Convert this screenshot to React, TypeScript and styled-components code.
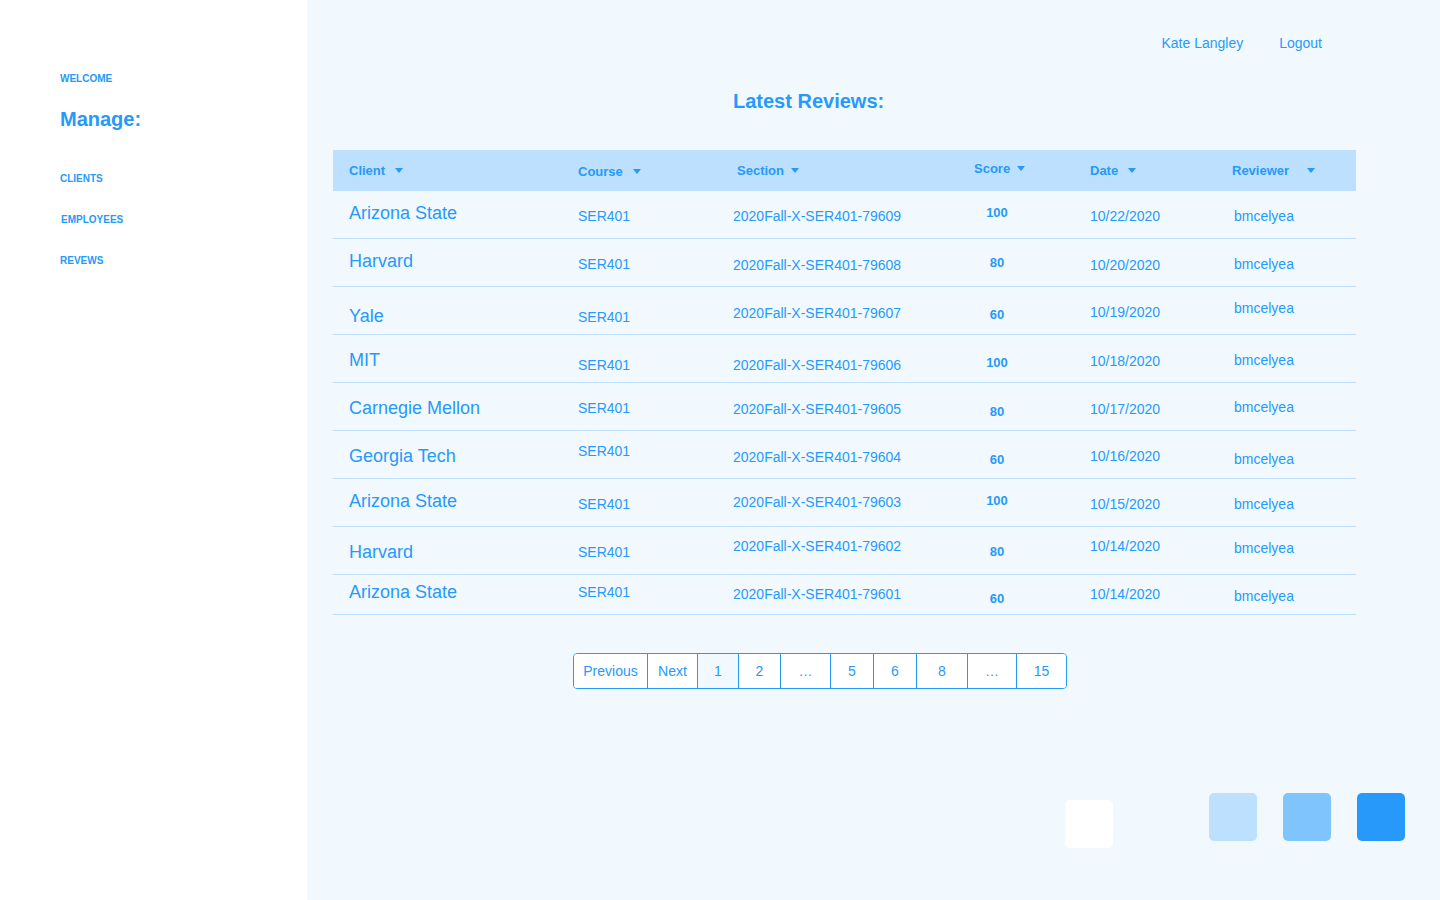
import React from "react";
import styled, { createGlobalStyle } from "styled-components";

const BLUE = "#2699fb";
const LIGHT = "#bce0fd";
const MID = "#7fc4fd";
const PALE = "#f1f9ff";

const GlobalStyle = createGlobalStyle`
  html, body {
    margin: 0;
    padding: 0;
    background: ${PALE};
    font-family: "Liberation Sans", Arial, sans-serif;
    color: ${BLUE};
  }
  * { box-sizing: border-box; }
`;

const Page = styled.div`
  display: flex;
  min-height: 100vh;
`;

const Sidebar = styled.aside`
  width: 307px;
  flex-shrink: 0;
  background: #ffffff;
  padding: 73px 0 0 60px;
  display: flex;
  flex-direction: column;
`;

const Welcome = styled.div`
  font-size: 10px;
  line-height: 12px;
  font-weight: 700;
`;

const Manage = styled.h2`
  margin: 23px 0 42px;
  font-size: 20px;
  line-height: 23px;
  font-weight: 700;
`;

const NavList = styled.nav`
  display: flex;
  flex-direction: column;
  gap: 29px;
`;

const NavItem = styled.a<{ $indent?: number }>`
  font-size: 10px;
  line-height: 12px;
  font-weight: 700;
  color: ${BLUE};
  text-decoration: none;
  padding-left: ${(p) => p.$indent ?? 0}px;
`;

const Main = styled.main`
  flex: 1;
  padding: 35px 84px 0 26px;
  display: flex;
  flex-direction: column;
`;

const TopBar = styled.div`
  display: flex;
  justify-content: flex-end;
  gap: 36px;
  padding-right: 34px;
`;

const TopLink = styled.a`
  font-size: 14px;
  line-height: 17px;
  color: ${BLUE};
  text-decoration: none;
`;

const Title = styled.h1`
  margin: 38px 0 37px;
  padding-left: 400px;
  font-size: 20px;
  line-height: 23px;
  font-weight: 700;
`;

const COLS = "229px 155px 241px 116px 142px 1fr";

const HeaderRow = styled.div`
  display: grid;
  grid-template-columns: ${COLS};
  align-items: center;
  height: 41px;
  padding-left: 16px;
  background: ${LIGHT};
`;

const HeaderCell = styled.div<{ $indent?: number; $dy?: number }>`
  display: flex;
  align-items: center;
  font-size: 13px;
  font-weight: 700;
  padding-left: ${(p) => p.$indent ?? 0}px;
  transform: translateY(${(p) => p.$dy ?? 0}px);
`;

const Caret = styled.span<{ $gap: number }>`
  margin-left: ${(p) => p.$gap}px;
  width: 0;
  height: 0;
  border-left: 4px solid transparent;
  border-right: 4px solid transparent;
  border-top: 5px solid ${BLUE};
`;

const Row = styled.div<{ $h: number }>`
  display: grid;
  grid-template-columns: ${COLS};
  align-items: start;
  height: ${(p) => p.$h}px;
  padding-left: 16px;
  border-bottom: 1px solid ${LIGHT};
`;

const Cell = styled.div<{ $dy: number }>`
  padding-top: ${(p) => p.$dy}px;
  font-size: 14px;
  line-height: 16px;
`;

const ClientCell = styled(Cell)`
  font-size: 18px;
  line-height: 21px;
`;

const ScoreCell = styled(Cell)`
  width: 46px;
  text-align: center;
  font-size: 13px;
  line-height: 15px;
  font-weight: 700;
`;

const ReviewerCell = styled(Cell)`
  padding-left: 2px;
`;

const Pager = styled.div`
  display: flex;
  margin: 38px 0 0 240px;
  width: max-content;
  border: 1px solid ${BLUE};
  border-radius: 4px;
  overflow: hidden;
  background: #ffffff;
`;

const PageBtn = styled.button<{ $w: number; $active?: boolean }>`
  width: ${(p) => p.$w}px;
  height: 34px;
  border: none;
  border-left: 1px solid ${BLUE};
  background: ${(p) => (p.$active ? PALE : "#ffffff")};
  color: ${BLUE};
  font-family: "Liberation Sans", Arial, sans-serif;
  font-size: 14px;
  padding: 0;
  cursor: pointer;
  &:first-child { border-left: none; }
`;

const Swatches = styled.div`
  display: flex;
  justify-content: flex-end;
  align-items: flex-start;
  margin: 104px -49px 0 0;
`;

const Swatch = styled.div<{ $color: string; $dy?: number; $gap?: number }>`
  width: 48px;
  height: 48px;
  border-radius: 5px;
  background: ${(p) => p.$color};
  margin-top: ${(p) => p.$dy ?? 0}px;
  margin-right: ${(p) => p.$gap ?? 0}px;
`;

type Review = {
  client: string;
  section: string;
  score: number;
  date: string;
  dy: [number, number, number, number, number, number];
};

const reviews: Review[] = [
  { client: "Arizona State", section: "79609", score: 100, date: "10/22/2020", dy: [12, 17, 17, 14, 17, 17] },
  { client: "Harvard", section: "79608", score: 80, date: "10/20/2020", dy: [12, 17, 18, 16, 18, 17] },
  { client: "Yale", section: "79607", score: 60, date: "10/19/2020", dy: [19, 22, 18, 20, 17, 13] },
  { client: "MIT", section: "79606", score: 100, date: "10/18/2020", dy: [15, 22, 22, 20, 18, 17] },
  { client: "Carnegie Mellon", section: "79605", score: 80, date: "10/17/2020", dy: [15, 17, 18, 21, 18, 16] },
  { client: "Georgia Tech", section: "79604", score: 60, date: "10/16/2020", dy: [15, 12, 18, 21, 17, 20] },
  { client: "Arizona State", section: "79603", score: 100, date: "10/15/2020", dy: [12, 17, 15, 14, 17, 17] },
  { client: "Harvard", section: "79602", score: 80, date: "10/14/2020", dy: [15, 17, 11, 17, 11, 13] },
  { client: "Arizona State", section: "79601", score: 60, date: "10/14/2020", dy: [7, 9, 11, 16, 11, 13] },
];

const pages: { label: string; w: number; active?: boolean }[] = [
  { label: "Previous", w: 73 },
  { label: "Next", w: 50 },
  { label: "1", w: 41, active: true },
  { label: "2", w: 42 },
  { label: "…", w: 50 },
  { label: "5", w: 43 },
  { label: "6", w: 43 },
  { label: "8", w: 51 },
  { label: "…", w: 49 },
  { label: "15", w: 50 },
];

export default function App() {
  return (
    <>
      <GlobalStyle />
      <Page>
        <Sidebar>
          <Welcome>WELCOME</Welcome>
          <Manage>Manage:</Manage>
          <NavList>
            <NavItem href="#">CLIENTS</NavItem>
            <NavItem href="#" $indent={1}>EMPLOYEES</NavItem>
            <NavItem href="#">REVEWS</NavItem>
          </NavList>
        </Sidebar>
        <Main>
          <TopBar>
            <TopLink href="#">Kate Langley</TopLink>
            <TopLink href="#">Logout</TopLink>
          </TopBar>
          <Title>Latest Reviews:</Title>

          <HeaderRow>
            <HeaderCell>Client<Caret $gap={10} /></HeaderCell>
            <HeaderCell $dy={1}>Course<Caret $gap={10} /></HeaderCell>
            <HeaderCell $indent={4}>Section<Caret $gap={7} /></HeaderCell>
            <HeaderCell $dy={-2}>Score<Caret $gap={7} /></HeaderCell>
            <HeaderCell>Date<Caret $gap={10} /></HeaderCell>
            <HeaderCell>Reviewer<Caret $gap={18} /></HeaderCell>
          </HeaderRow>
          {reviews.map((r, i) => (
            <Row key={i} $h={i === reviews.length - 1 ? 40 : 48}>
              <ClientCell $dy={r.dy[0]}>{r.client}</ClientCell>
              <Cell $dy={r.dy[1]}>SER401</Cell>
              <Cell $dy={r.dy[2]}>2020Fall-X-SER401-{r.section}</Cell>
              <ScoreCell $dy={r.dy[3]}>{r.score}</ScoreCell>
              <Cell $dy={r.dy[4]}>{r.date}</Cell>
              <ReviewerCell $dy={r.dy[5]}>bmcelyea</ReviewerCell>
            </Row>
          ))}

          <Pager>
            {pages.map((p, i) => (
              <PageBtn key={i} $w={p.w} $active={p.active}>{p.label}</PageBtn>
            ))}
          </Pager>

          <Swatches>
            <Swatch $color="#ffffff" $dy={7} $gap={96} />
            <Swatch $color={LIGHT} $gap={26} />
            <Swatch $color={MID} $gap={26} />
            <Swatch $color={BLUE} />
          </Swatches>
        </Main>
      </Page>
    </>
  );
}
